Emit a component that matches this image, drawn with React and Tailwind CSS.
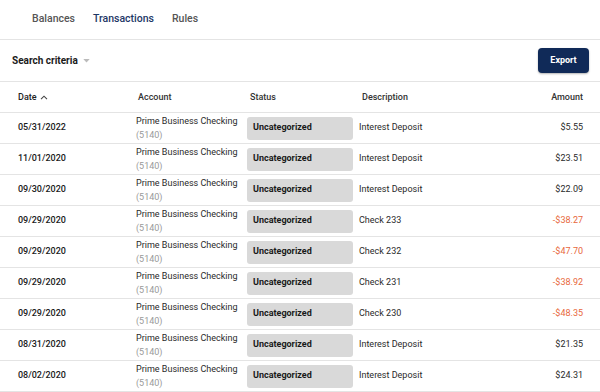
const rows = [
  { date: '05/31/2022', desc: 'Interest Deposit', amount: '$5.55' },
  { date: '11/01/2020', desc: 'Interest Deposit', amount: '$23.51' },
  { date: '09/30/2020', desc: 'Interest Deposit', amount: '$22.09' },
  { date: '09/29/2020', desc: 'Check 233', amount: '-$38.27' },
  { date: '09/29/2020', desc: 'Check 232', amount: '-$47.70' },
  { date: '09/29/2020', desc: 'Check 231', amount: '-$38.92' },
  { date: '09/29/2020', desc: 'Check 230', amount: '-$48.35' },
  { date: '08/31/2020', desc: 'Interest Deposit', amount: '$21.35' },
  { date: '08/02/2020', desc: 'Interest Deposit', amount: '$24.31' },
]

const cols = 'grid grid-cols-[118px_111px_112px_1fr_auto] pl-[18px] pr-[17px]'

export default function App() {
  return (
    <div className="w-[600px] h-[392px] overflow-hidden bg-white text-[#222] font-['Roboto',sans-serif]">
      <nav className="flex h-[40px] items-center gap-[18px] pl-[32px] pb-[1px] text-[10.5px] font-medium border-b border-[#e4e4e4]">
        <span className="text-[#555]">Balances</span>
        <span className="text-[#1d3766]">Transactions</span>
        <span className="text-[#555]">Rules</span>
      </nav>

      <div className="flex h-[42px] items-center justify-between pl-[12px] pr-[11px] border-b border-[#e4e4e4]">
        <div className="flex items-center gap-[5px]">
          <span className="text-[10px] font-bold text-[#1a1a1a]">Search criteria</span>
          <svg width="7" height="4" viewBox="0 0 8 5" className="mt-[1px]">
            <path d="M0 0h8L4 4.5z" fill="#bbb" />
          </svg>
        </div>
        <button className="h-[25px] w-[51px] rounded-[4px] bg-[#102a58] text-[9px] font-bold text-white shadow-[0_1px_2px_rgba(0,0,0,0.3)]">
          Export
        </button>
      </div>

      <div className={`${cols} h-[31px] pt-[1px] items-center text-[9px] font-medium text-[#333] border-b border-[#e4e4e4]`}>
        <div className="flex items-center gap-[3px] text-[#222]">
          Date
          <svg width="8" height="5" viewBox="0 0 8 5">
            <path d="M1 4.2L4 1.2l3 3" fill="none" stroke="#444" strokeWidth="1.1" />
          </svg>
        </div>
        <div className="pl-[2px]">Account</div>
        <div className="pl-[3px]">Status</div>
        <div className="pl-[3px]">Description</div>
        <div className="text-right">Amount</div>
      </div>

      {rows.map((r, i) => (
        <div key={i} className={`${cols} h-[31px] items-center border-b border-[#e4e4e4] text-[9px] whitespace-nowrap`}>
          <div className="font-medium text-[#1a1a1a]">{r.date}</div>
          <div className="leading-[14px]">
            <div className="text-[#2a2a2a]">Prime Business Checking</div>
            <div className="text-[#999]">(5140)</div>
          </div>
          <div className="pr-[6px]">
            <div className="flex h-[23px] items-center rounded-[3px] bg-[#d9d9d9] pl-[6px] font-bold text-[#1a1a1a]">
              Uncategorized
            </div>
          </div>
          <div className="text-[#2a2a2a]">{r.desc}</div>
          <div className={`text-right ${r.amount.startsWith('-') ? 'text-[#e8673c]' : 'text-[#2a2a2a]'}`}>{r.amount}</div>
        </div>
      ))}
    </div>
  )
}
